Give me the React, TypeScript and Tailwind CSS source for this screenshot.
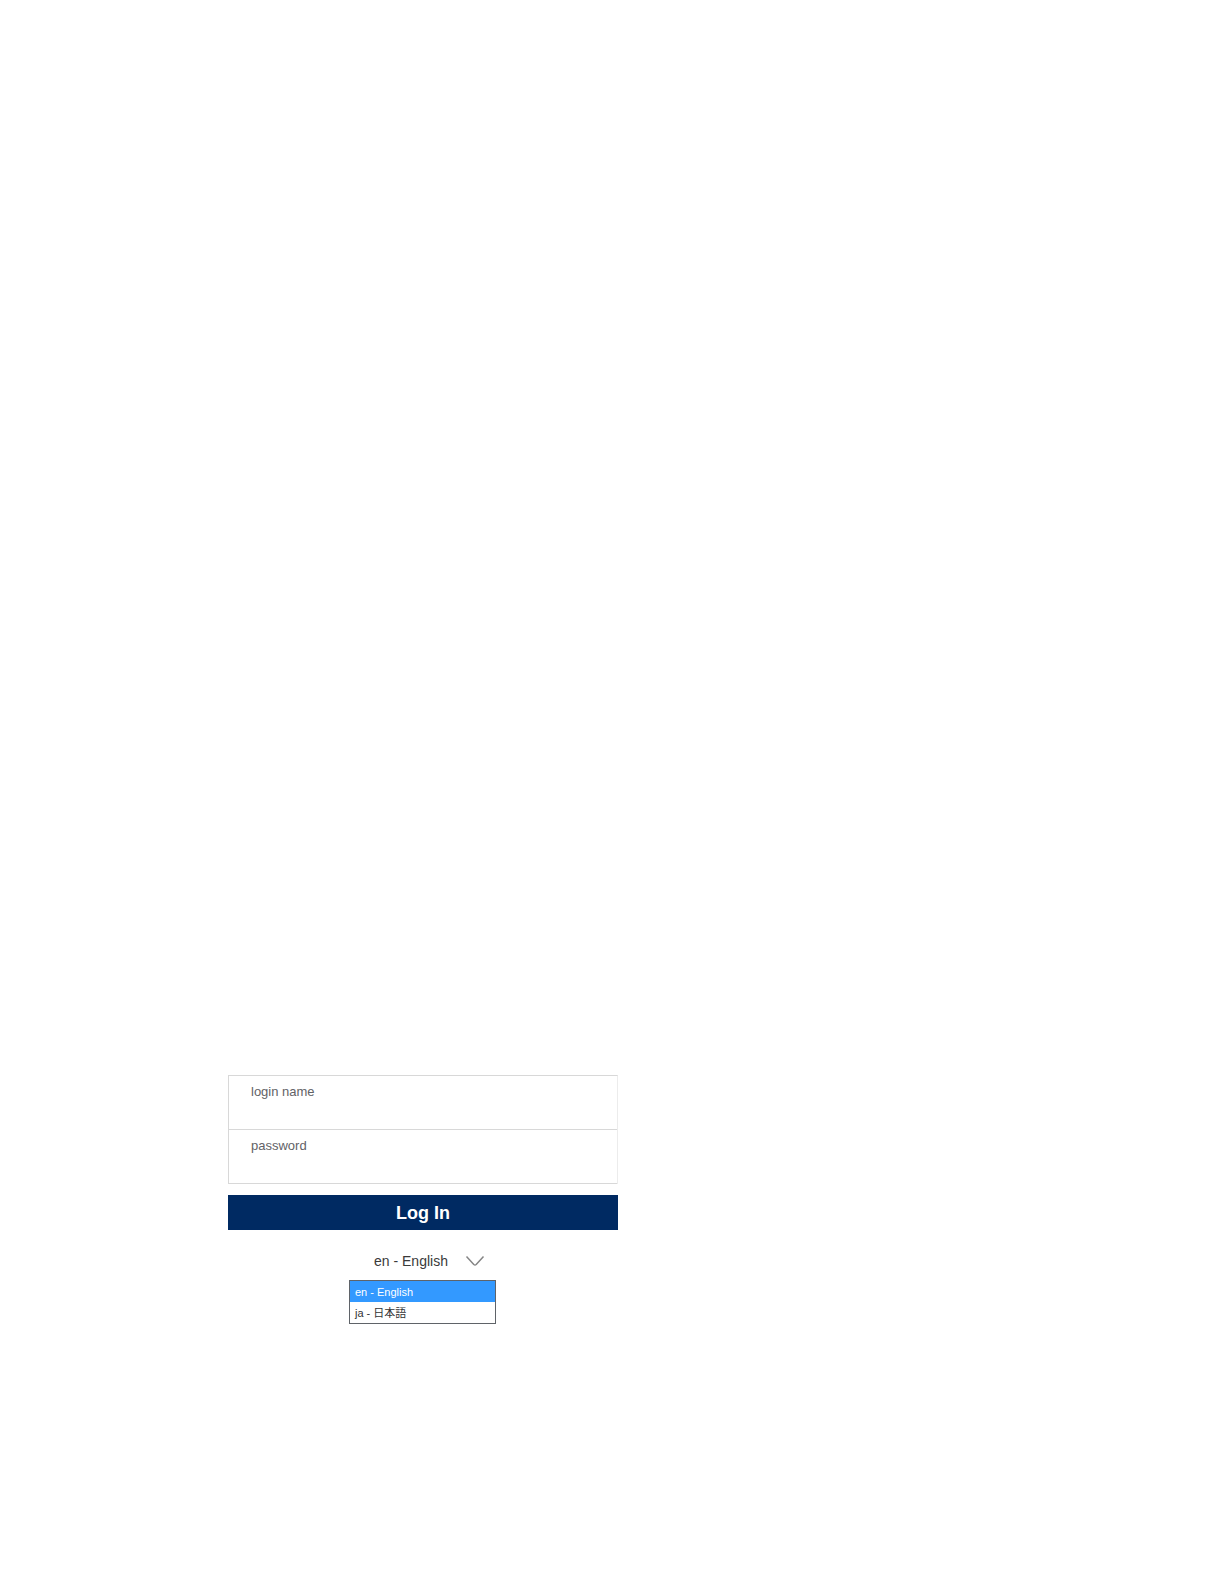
import { useState } from "react";

const languages = [
  { code: "en", label: "en - English" },
  { code: "ja", label: "ja - 日本語" },
];

function Field({ id, label, type }: { id: string; label: string; type: string }) {
  return (
    <div className="flex h-[54px] flex-col border-b border-[#d8d8d8] px-[22px] pt-2">
      <label htmlFor={id} className="text-[13px] leading-4 text-[#626266]">
        {label}
      </label>
      <input id={id} type={type} className="min-h-0 w-full flex-1 bg-transparent text-sm outline-none" />
    </div>
  );
}

export default function App() {
  const [language, setLanguage] = useState("en");

  return (
    <main className="min-h-screen bg-white px-[228px] pt-[1075px] pb-12 font-['Liberation_Sans',Arial,'Noto_Sans_CJK_JP',sans-serif]">
      <form className="w-full max-w-[390px]" onSubmit={(e) => e.preventDefault()}>
        <div className="border-t border-r border-l border-[#d8d8d8] border-r-[#ececec]">
          <Field id="login-name" label="login name" type="text" />
          <Field id="password" label="password" type="password" />
        </div>

        <button
          type="submit"
          className="mt-[11px] flex h-[35px] w-full items-center justify-center bg-[#002a62] text-lg font-bold text-white"
        >
          Log In
        </button>

        <div className="mx-auto mt-[18px] w-[148px]">
          <div className="relative flex h-[26px] items-center">
            <select
              aria-label="Language"
              value={language}
              onChange={(e) => setLanguage(e.target.value)}
              className="h-full w-full appearance-none bg-transparent pl-[25px] text-[14px] text-[#3a3a3a] outline-none"
            >
              {languages.map((l) => (
                <option key={l.code} value={l.code}>
                  {l.label}
                </option>
              ))}
            </select>
            <svg
              aria-hidden="true"
              viewBox="0 0 20 12"
              className="pointer-events-none absolute right-3 h-3 w-5"
              fill="none"
              stroke="#858585"
              strokeWidth="1.5"
            >
              <path d="M1.5 1.5 L8.8 9.5 Q10 10.6 11.2 9.5 L18.5 1.5" />
            </svg>
          </div>
          <ul role="listbox" aria-label="Languages" className="mt-[6px] mr-px border border-[#5f6368] bg-white">
            {languages.map((l) => (
              <li
                key={l.code}
                role="option"
                aria-selected={l.code === language}
                onClick={() => setLanguage(l.code)}
                className="flex h-[21px] cursor-default items-center px-[5px] text-[11px] leading-4 text-[#333333] aria-selected:bg-[#3399ff] aria-selected:text-white"
              >
                {l.label}
              </li>
            ))}
          </ul>
        </div>
      </form>
    </main>
  );
}
